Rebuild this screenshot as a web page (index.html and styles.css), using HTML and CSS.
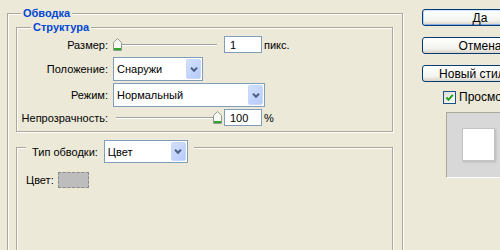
FILE: index.html
```html
<!DOCTYPE html>
<html lang="ru">
<head>
  <meta charset="UTF-8" />
  <title>Обводка</title>
  <link rel="stylesheet" href="styles.css">
</head>
<body>
  <div class="dialog">
    <fieldset class="group stroke">
      <legend>Обводка</legend>

      <fieldset class="group structure">
        <legend>Структура</legend>
        <div class="fields">
          <label>Размер:</label>
          <div class="ctrl">
            <div class="slider">
              <div class="track"></div>
              <svg class="thumb" width="9" height="13" viewBox="0 0 9 13"><path d="M0.5 4.5 L4.5 0.5 L8.5 4.5 V12.5 H0.5 Z" fill="#f7f7f3" stroke="#8f9c8f"/><rect x="1" y="10" width="7" height="2" fill="#2ea52e"/></svg>
            </div>
            <input class="num" type="text" value="1" />
            <span>пикс.</span>
          </div>

          <label>Положение:</label>
          <div class="ctrl">
            <div class="combo short">
              <span class="combo-text">Снаружи</span>
              <span class="combo-btn"><svg width="8" height="5" viewBox="0 0 8 5"><path d="M1 0.8 L4 3.8 L7 0.8" stroke="#4d6185" stroke-width="2" fill="none"/></svg></span>
            </div>
          </div>

          <label>Режим:</label>
          <div class="ctrl">
            <div class="combo long">
              <span class="combo-text">Нормальный</span>
              <span class="combo-btn"><svg width="8" height="5" viewBox="0 0 8 5"><path d="M1 0.8 L4 3.8 L7 0.8" stroke="#4d6185" stroke-width="2" fill="none"/></svg></span>
            </div>
          </div>

          <label>Непрозрачность:</label>
          <div class="ctrl">
            <div class="slider">
              <div class="track"></div>
              <svg class="thumb end" width="9" height="13" viewBox="0 0 9 13"><path d="M0.5 4.5 L4.5 0.5 L8.5 4.5 V12.5 H0.5 Z" fill="#f7f7f3" stroke="#8f9c8f"/><rect x="1" y="10" width="7" height="2" fill="#2ea52e"/></svg>
            </div>
            <input class="num" type="text" value="100" />
            <span>%</span>
          </div>
        </div>
      </fieldset>

      <fieldset class="group fill">
        <legend>
          <div class="legend-body">
            <span>Тип обводки:</span>
            <div class="combo type">
              <span class="combo-text">Цвет</span>
              <span class="combo-btn"><svg width="8" height="5" viewBox="0 0 8 5"><path d="M1 0.8 L4 3.8 L7 0.8" stroke="#4d6185" stroke-width="2" fill="none"/></svg></span>
            </div>
          </div>
        </legend>
        <div class="color-row">
          <span>Цвет:</span>
          <span class="swatch"></span>
        </div>
      </fieldset>
    </fieldset>

    <div class="side">
      <button class="btn default">Да</button>
      <button class="btn">Отмена</button>
      <button class="btn">Новый стиль...</button>
      <div class="check-row">
        <span class="check"><svg width="11" height="11" viewBox="0 0 11 11"><path d="M2.5 5.5 L4.5 7.8 L8.8 2.8" stroke="#21a121" stroke-width="2" fill="none"/></svg></span>
        <span>Просмотр</span>
      </div>
      <div class="preview">
        <div class="preview-swatch"></div>
      </div>
    </div>
  </div>
</body>
</html>
```

FILE: styles.css
```css
html, body {
  margin: 0;
  width: 500px;
  height: 250px;
  overflow: hidden;
}

body {
  background: #ece9d8;
  font: 11px "Liberation Sans", Arial, sans-serif;
  color: #000;
}

.dialog {
  display: flex;
  align-items: flex-start;
}

/* group boxes: 1px grey line with a white line beside it */
.group {
  margin: 0;
  min-width: 0;
  box-sizing: border-box;
  border: 1px solid #aca899;
  box-shadow: 1px 1px 0 #fff, inset 1px 1px 0 #fff;
}

.group > legend {
  font-weight: bold;
  color: #0046d5;
  line-height: 13px;
  padding: 0 2px;
  background: #ece9d8;
}

.stroke {
  flex-shrink: 0;
  width: 396px;
  height: 320px;
  margin: 7px 0 0 7px;
  padding: 1px 9px 0 8px;
}

.stroke > legend {
  margin-left: 5px;
}

.structure {
  width: 377px;
  padding: 0 0 5px 0;
}

.structure > legend {
  margin-left: 14px;
}

.fields {
  display: grid;
  grid-template-columns: 91px auto;
  grid-template-rows: 21px 24px 24px 17px;
  row-gap: 2px;
  column-gap: 5px;
  align-items: center;
}

.fields label {
  text-align: right;
  white-space: nowrap;
}

.ctrl {
  display: flex;
  align-items: center;
  gap: 2px;
}

.slider {
  position: relative;
  width: 109px;
  height: 13px;
}

.track {
  margin: 6px 0 0 3px;
  width: 101px;
  border-top: 1px solid #a2a2a2;
  border-bottom: 1px solid #fff;
}

.thumb {
  position: absolute;
  top: 0;
  left: 0;
}

.thumb.end {
  left: 100px;
}

.num {
  width: 38px;
  height: 17px;
  box-sizing: border-box;
  margin: 0;
  padding: 0 0 0 5px;
  border: 1px solid #7f9db9;
  background: #fff;
  font: inherit;
  color: #000;
  outline: none;
}

.combo {
  display: flex;
  align-items: center;
  justify-content: space-between;
  box-sizing: border-box;
  height: 24px;
  border: 1px solid #7f9db9;
  background: #fff;
}

.combo.short { width: 90px; }
.combo.long { width: 152px; }
.combo.type { width: 84px; height: 23px; }

.combo-text {
  padding-left: 3px;
  font-size: 11px;
}

.combo-btn {
  display: flex;
  align-items: center;
  justify-content: center;
  box-sizing: border-box;
  width: 15px;
  height: 20px;
  margin: 1px;
  border: 1px solid #c9d8fc;
  border-radius: 2px;
  background: linear-gradient(135deg, #d3e0fd, #b6cbfa);
}

.combo.type .combo-btn {
  height: 19px;
}

.fill {
  width: 377px;
  min-height: 200px;
  padding: 0;
}

.fill > legend {
  margin-left: 9px;
  padding: 8px 0 0 0;
  background: none;
  font-weight: normal;
  color: #000;
  line-height: normal;
}

.legend-body {
  display: flex;
  align-items: center;
  gap: 6px;
  padding: 0 6px;
  background: #ece9d8;
}

.color-row {
  display: flex;
  align-items: center;
  gap: 4px;
  padding: 9px 0 0 9px;
}

.swatch {
  width: 31px;
  height: 16px;
  box-sizing: border-box;
  border: 1px dashed #8a8a8a;
  background: #bdbdbd;
}

/* right column */
.side {
  flex-shrink: 0;
  width: 116px;
  margin-left: 19px;
  padding-top: 9px;
  display: flex;
  flex-direction: column;
}

.btn {
  width: 116px;
  height: 17px;
  box-sizing: border-box;
  margin: 0 0 11px;
  padding: 0;
  border: 1px solid #003c74;
  border-radius: 3px;
  background: linear-gradient(#fff, #f3f3ee 70%, #d9d3c8);
  font: 12px "Liberation Sans", Arial, sans-serif;
  color: #000;
  line-height: 1;
}

.btn.default {
  box-shadow: inset 0 1px 0 #cee7ff, inset 1px 0 0 #bcd4f6, inset -1px 0 0 #bcd4f6, inset 0 -1px 0 #89ade4;
}

.check-row {
  display: flex;
  align-items: center;
  gap: 3px;
  margin: -3px 0 0 21px;
  font-size: 12px;
}

.check {
  display: flex;
  align-items: center;
  justify-content: center;
  width: 13px;
  height: 13px;
  box-sizing: border-box;
  border: 1px solid #1c5180;
  background: linear-gradient(135deg, #dcdcd7, #fff);
}

.preview {
  margin: 8px 0 0 24px;
  height: 66px;
  box-sizing: border-box;
  border-top: 1px solid #aca899;
  border-left: 1px solid #aca899;
  border-bottom: 1px solid #fff;
  background: #d8d8d8;
}

.preview-swatch {
  width: 33px;
  height: 33px;
  box-sizing: border-box;
  margin: 15px 0 0 15px;
  border: 1px solid #c4c4c4;
  background: #fff;
  box-shadow: 1px 1px 2px rgba(0, 0, 0, 0.15);
}
```
